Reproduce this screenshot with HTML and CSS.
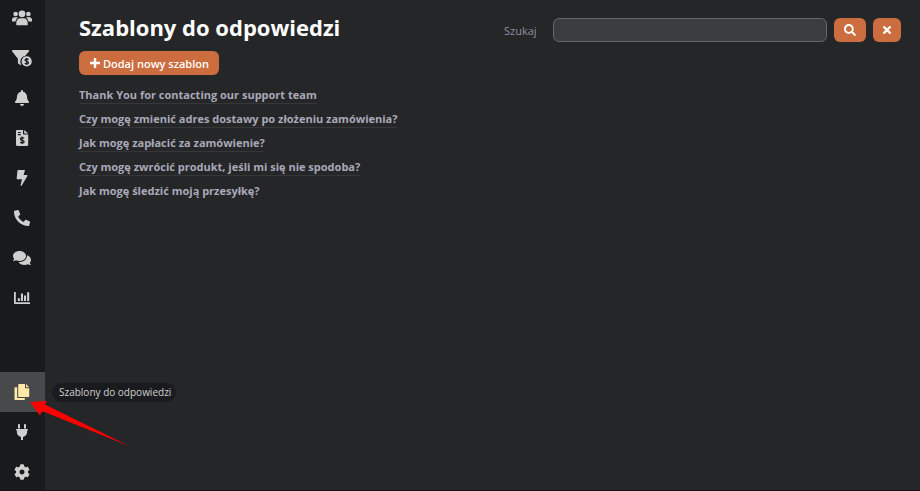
FILE: index.html
```html
<!DOCTYPE html>
<html lang="pl">
<head>
  <meta charset="UTF-8">
  <meta name="viewport" content="width=device-width, initial-scale=1.0">
  <title>Szablony do odpowiedzi</title>
  <link rel="stylesheet" href="styles.css">
</head>
<body>

  <!-- Sidebar -->
  <nav class="sidebar">
    <div class="menu menu-top">
      <a href="#" class="menu-item">
        <svg class="icon" viewBox="0 0 20 20"><circle cx="10" cy="5.800" r="3.400"/><circle cx="3.600" cy="6" r="2.300"/><circle cx="16.400" cy="6" r="2.300"/><path d="M4.300 17.200v-2.600c0-2.500 1.800-4.400 4.200-4.400h3c2.400 0 4.200 1.900 4.200 4.400v2.600zM0 13.400v-1.600c0-1.500 1.100-2.600 2.500-2.600h2.200c.5 0 1 .2 1.400.4-1.300.9-2.300 2.300-2.600 3.800zM20 13.400v-1.600c0-1.500-1.100-2.600-2.500-2.600h-2.200c-.5 0-1 .2-1.400.4 1.300.9 2.300 2.300 2.600 3.800z"/></svg>
      </a>
      <a href="#" class="menu-item">
        <svg class="icon" viewBox="0 0 20 20"><path d="M.8 2h15.400c.8 0 1.200.9.7 1.500l-3.600 4.200a6 6 0 0 0-4.400 8.400v1.300l-3-2.200v-4.500L.2 3.500C-.3 2.900.1 2 .8 2z"/><circle cx="14.700" cy="13.400" r="5.100"/><path class="cut" d="M16.500 11.700c-.4-.6-1-.8-1.800-.8-1 0-1.700.4-1.700 1.200 0 1.700 3.500.8 3.500 2.600 0 .8-.7 1.200-1.800 1.200-.9 0-1.500-.3-1.900-.9M14.700 10v7"/></svg>
      </a>
      <a href="#" class="menu-item">
        <svg class="icon icon-md" viewBox="0 0 448 512"><path d="M224 512c35.320 0 63.970-28.650 63.970-64H160.030c0 35.350 28.650 64 63.970 64zm215.390-149.710c-19.320-20.760-55.470-51.990-55.470-154.290 0-77.700-54.480-139.900-127.940-155.160V32c0-17.670-14.320-32-31.980-32s-31.980 14.330-31.980 32v20.840C118.560 68.100 64.080 130.300 64.080 208c0 102.300-36.150 133.530-55.470 154.290-6 6.450-8.660 14.160-8.610 21.710.11 16.400 12.980 32 32.100 32h383.800c19.120 0 32-15.600 32.100-32 .05-7.550-2.610-15.270-8.610-21.710z"/></svg>
      </a>
      <a href="#" class="menu-item">
        <svg class="icon icon-md" viewBox="0 0 16 16"><path d="M3.200 0H9v3.600c0 .6.400 1 1 1h4.200v10.200c0 .7-.5 1.200-1.200 1.200H3.200c-.7 0-1.200-.5-1.200-1.200V1.200C2 .5 2.500 0 3.200 0zM10.200 0l4 3.500h-4z"/><path class="cut" d="M3.800 2.500h3M3.800 4.700h3M10 8.500c-.4-.6-1-.9-1.900-.9-1 0-1.700.5-1.700 1.300 0 1.900 3.700.9 3.700 2.800 0 .8-.7 1.300-1.900 1.300-.9 0-1.600-.3-2-1M8.100 6.500v7.600"/></svg>
      </a>
      <a href="#" class="menu-item">
        <svg class="icon icon-md" viewBox="0 0 16 16"><path d="M4 0h7l-1.400 5h3.300c.5 0 .8.5.5 1L7.600 15.700c-.3.500-1.100.2-1-.4L8 9.200H3.300c-.4 0-.7-.3-.6-.7L3.500.5C3.500.2 3.700 0 4 0z"/></svg>
      </a>
      <a href="#" class="menu-item">
        <svg class="icon icon-md" viewBox="0 0 512 512"><path transform="matrix(-1 0 0 1 512 0)" d="M493.400 24.600l-104-24c-11.300-2.600-22.900 3.300-27.500 13.900l-48 112c-4.200 9.800-1.400 21.300 6.900 28l60.600 49.600c-36 76.700-98.900 140.500-177.200 177.200l-49.600-60.600c-6.800-8.300-18.200-11.100-28-6.900l-112 48C3.900 366.500-2 378.100.6 389.400l24 104C27.100 504.200 36.700 512 48 512c256.100 0 464-207.500 464-464 0-11.200-7.700-20.900-18.600-23.400z"/></svg>
      </a>
      <a href="#" class="menu-item">
        <svg class="icon icon-lg" viewBox="0 0 576 512"><path d="M416 192c0-88.400-93.100-160-208-160S0 103.600 0 192c0 34.300 14.100 65.900 38 92-13.400 30.200-35.500 54.200-35.800 54.500-2.200 2.300-2.800 5.700-1.500 8.700S4.800 352 8 352c36.600 0 66.900-12.300 88.700-25 32.200 15.700 70.300 25 111.300 25 114.900 0 208-71.600 208-160zm122 220c23.900-26 38-57.700 38-92 0-66.900-53.500-124.200-129.300-148.100.9 6.600 1.300 13.300 1.300 20.100 0 105.900-107.700 192-240 192-10.800 0-21.300-.8-31.700-1.900C207.800 439.600 281.800 480 368 480c41 0 79.100-9.200 111.300-25 21.800 12.700 52.100 25 88.700 25 3.200 0 6.100-1.900 7.300-4.800 1.300-2.900.7-6.300-1.500-8.700-.3-.3-22.400-24.200-35.800-54.500z"/></svg>
      </a>
      <a href="#" class="menu-item">
        <svg class="icon icon-md" viewBox="0 0 16 16"><path d="M0 2h1.800v10.200H16V14H1c-.6 0-1-.4-1-1zM3.800 8.200h2.100v2.900H3.800zM6.900 3.600H9v7.500H6.900zM10 5.600h2.100v5.500H10zM13.100 2.200h2.100v8.900h-2.100z"/></svg>
      </a>
    </div>
    <div class="menu menu-bottom">
      <a href="#" class="menu-item active">
        <svg class="icon icon-md" viewBox="0 0 16 16"><path d="M5.300 0H11v3.400c0 .5.400.9.900.9h3.300v7.600c0 .6-.5 1.100-1.100 1.100H5.300c-.6 0-1.100-.5-1.100-1.100V1.100C4.200.5 4.700 0 5.300 0zM12 0l3.200 3.300H12zM1.600 3.200h1.600v9.900c0 .6.400 1 1 1h6.700v.8c0 .6-.5 1.100-1.100 1.100H1.600c-.6 0-1.100-.5-1.100-1.100V4.300c0-.6.5-1.100 1.100-1.100z"/></svg>
        <span class="tooltip">Szablony do odpowiedzi</span>
      </a>
      <a href="#" class="menu-item">
        <svg class="icon icon-md" viewBox="0 0 16 16"><path d="M4 1c0-1.300 2-1.300 2 0v3.500H4zM10 1c0-1.300 2-1.300 2 0v3.500h-2zM2.500 5h11c.7 0 .7 1.500 0 1.500h-.4v1.700c0 2.300-1.700 4.200-4.100 4.700V16H7v-3.100c-2.400-.5-4.100-2.400-4.100-4.700V6.500h-.4c-.7 0-.7-1.500 0-1.500z"/></svg>
      </a>
      <a href="#" class="menu-item">
        <svg class="icon icon-md" viewBox="0 0 512 512"><path d="M487.400 315.700l-42.600-24.600c4.300-23.200 4.300-47 0-70.200l42.600-24.600c4.900-2.800 7.100-8.600 5.500-14-11.100-35.600-30-67.800-54.700-94.600-3.800-4.100-10-5.100-14.800-2.300L380.800 110c-17.900-15.400-38.500-27.300-60.800-35.100V25.800c0-5.600-3.900-10.500-9.400-11.700-36.700-8.200-74.300-7.800-109.200 0-5.500 1.200-9.400 6.100-9.400 11.700V75c-22.200 7.900-42.800 19.800-60.800 35.100L88.700 85.500c-4.900-2.800-11-1.900-14.800 2.300-24.700 26.700-43.600 58.900-54.700 94.600-1.700 5.400.6 11.200 5.500 14L67.300 221c-4.300 23.200-4.300 47 0 70.200l-42.600 24.600c-4.900 2.800-7.100 8.600-5.500 14 11.100 35.600 30 67.800 54.700 94.600 3.800 4.100 10 5.100 14.800 2.300l42.600-24.600c17.900 15.400 38.500 27.300 60.800 35.100v49.200c0 5.600 3.900 10.500 9.400 11.700 36.700 8.200 74.300 7.800 109.200 0 5.500-1.200 9.400-6.100 9.400-11.700v-49.200c22.200-7.900 42.800-19.800 60.800-35.100l42.600 24.600c4.900 2.800 11 1.900 14.800-2.300 24.700-26.700 43.600-58.900 54.700-94.600 1.500-5.500-.7-11.300-5.600-14.100zM256 336c-44.100 0-80-35.900-80-80s35.900-80 80-80 80 35.900 80 80-35.900 80-80 80z"/></svg>
      </a>
    </div>
    <svg class="arrow" viewBox="0 0 100 46"><path d="M1 2L18 1l-2 3.500L100 46 13 11l-2 4.500z"/></svg>
  </nav>

  <!-- Content -->
  <main class="content">
    <div class="header">
      <h1>Szablony do odpowiedzi</h1>
      <form class="search">
        <label for="search">Szukaj</label>
        <input type="text" id="search">
        <button type="submit" class="btn" aria-label="Szukaj">
          <svg class="btn-icon" viewBox="0 0 512 512"><path d="M505 442.700L405.300 343c-4.500-4.500-10.600-7-17-7H372c27.600-35.300 44-79.700 44-128C416 93.100 322.900 0 208 0S0 93.100 0 208s93.100 208 208 208c48.300 0 92.700-16.400 128-44v16.300c0 6.400 2.500 12.500 7 17l99.700 99.700c9.400 9.400 24.600 9.400 33.900 0l28.300-28.300c9.400-9.400 9.400-24.600.1-34zM208 336c-70.700 0-128-57.200-128-128s57.200-128 128-128 128 57.200 128 128-57.200 128-128 128z"/></svg>
        </button>
        <button type="reset" class="btn btn-clear" aria-label="Wyczyść">
          <svg class="btn-icon" viewBox="0 0 12 12"><path class="line" d="M2.500 2.500l7 7M9.500 2.500l-7 7"/></svg>
        </button>
      </form>
    </div>

    <button type="button" class="btn btn-add">
      <svg class="btn-icon" viewBox="0 0 12 12"><path class="line" d="M6 1v10M1 6h10"/></svg>
      Dodaj nowy szablon
    </button>

    <ul class="templates">
      <li><a href="#">Thank You for contacting our support team</a></li>
      <li><a href="#">Czy mogę zmienić adres dostawy po złożeniu zamówienia?</a></li>
      <li><a href="#">Jak mogę zapłacić za zamówienie?</a></li>
      <li><a href="#">Czy mogę zwrócić produkt, jeśli mi się nie spodoba?</a></li>
      <li><a href="#">Jak mogę śledzić moją przesyłkę?</a></li>
    </ul>
  </main>

</body>
</html>
```
FILE: styles.css
```css
* {
  box-sizing: border-box;
}

body {
  margin: 0;
  display: flex;
  height: 100vh;
  overflow: hidden;
  background-color: #252628;
  border-bottom: 1px solid #151618;
  font-family: "Open Sans", "Noto Sans", sans-serif;
  font-size: 11px;
}

/* Sidebar */
.sidebar {
  position: relative;
  display: flex;
  flex-direction: column;
  justify-content: space-between;
  width: 45px;
  background-color: #191a1c;
}

.menu-top {
  margin-top: -2px;
}

.menu-bottom {
  margin-bottom: -2px;
}

.menu-item {
  position: relative;
  display: flex;
  justify-content: center;
  align-items: center;
  height: 40px;
  padding-right: 1px;
  color: #cfcfcf;
  text-decoration: none;
}

.menu-item.active {
  background-color: #48494b;
  color: #ffe9a6;
}

.icon {
  width: 20px;
  height: 20px;
  fill: currentColor;
}

.icon-md {
  width: 16px;
  height: 16px;
}

.icon-lg {
  width: 18px;
  height: 16px;
}

.cut {
  fill: none;
  stroke: #191a1c;
  stroke-width: 1.2;
}

.tooltip {
  position: absolute;
  left: 52px;
  padding: 0 5px 0 7px;
  border-radius: 10px;
  background-color: #1a1b1e;
  color: #d0d0d0;
  font-size: 10px;
  line-height: 19px;
  white-space: nowrap;
}

.arrow {
  position: absolute;
  left: 29px;
  bottom: 44px;
  width: 100px;
  height: 46px;
  fill: #ff0000;
}

/* Content */
.content {
  flex: 1;
  padding: 9px 19px 0 34px;
}

.header {
  display: flex;
  justify-content: space-between;
  align-items: center;
  height: 42px;
}

h1 {
  margin: 0;
  padding-bottom: 6px;
  color: #ffffff;
  font-size: 22px;
  font-weight: 700;
  line-height: 36px;
  white-space: nowrap;
}

.search {
  display: flex;
  align-items: center;
  gap: 7px;
  width: 397px;
}

.search label {
  width: 42px;
  color: #8e8ea0;
  font-size: 11px;
}

.search input {
  flex: 1;
  min-width: 0;
  height: 24px;
  padding: 0 8px;
  border: 1px solid #66676a;
  border-radius: 6px;
  background-color: #3b3c3e;
  color: #ffffff;
  font: inherit;
}

.btn {
  display: flex;
  justify-content: center;
  align-items: center;
  gap: 2px;
  height: 24px;
  padding: 0 10px;
  border: none;
  border-radius: 6px;
  background-color: #cb6d3e;
  color: #ffffff;
  font-family: inherit;
  font-size: 11px;
  font-weight: 600;
  cursor: pointer;
}

.btn-clear {
  padding: 0 8px;
}

.btn-icon {
  width: 12px;
  height: 12px;
  fill: currentColor;
}

.btn-icon .line {
  stroke: currentColor;
  stroke-width: 2.4;
}

.templates {
  margin: 8px 0 0;
  padding: 0;
  list-style: none;
}

.templates li {
  display: flex;
  height: 24px;
  align-items: center;
}

.templates a {
  border-bottom: 1px solid #36373a;
  color: #a9a9b8;
  font-weight: 700;
  line-height: 17px;
  text-decoration: none;
}

.templates li:last-child a {
  border-bottom-color: transparent;
}
```
